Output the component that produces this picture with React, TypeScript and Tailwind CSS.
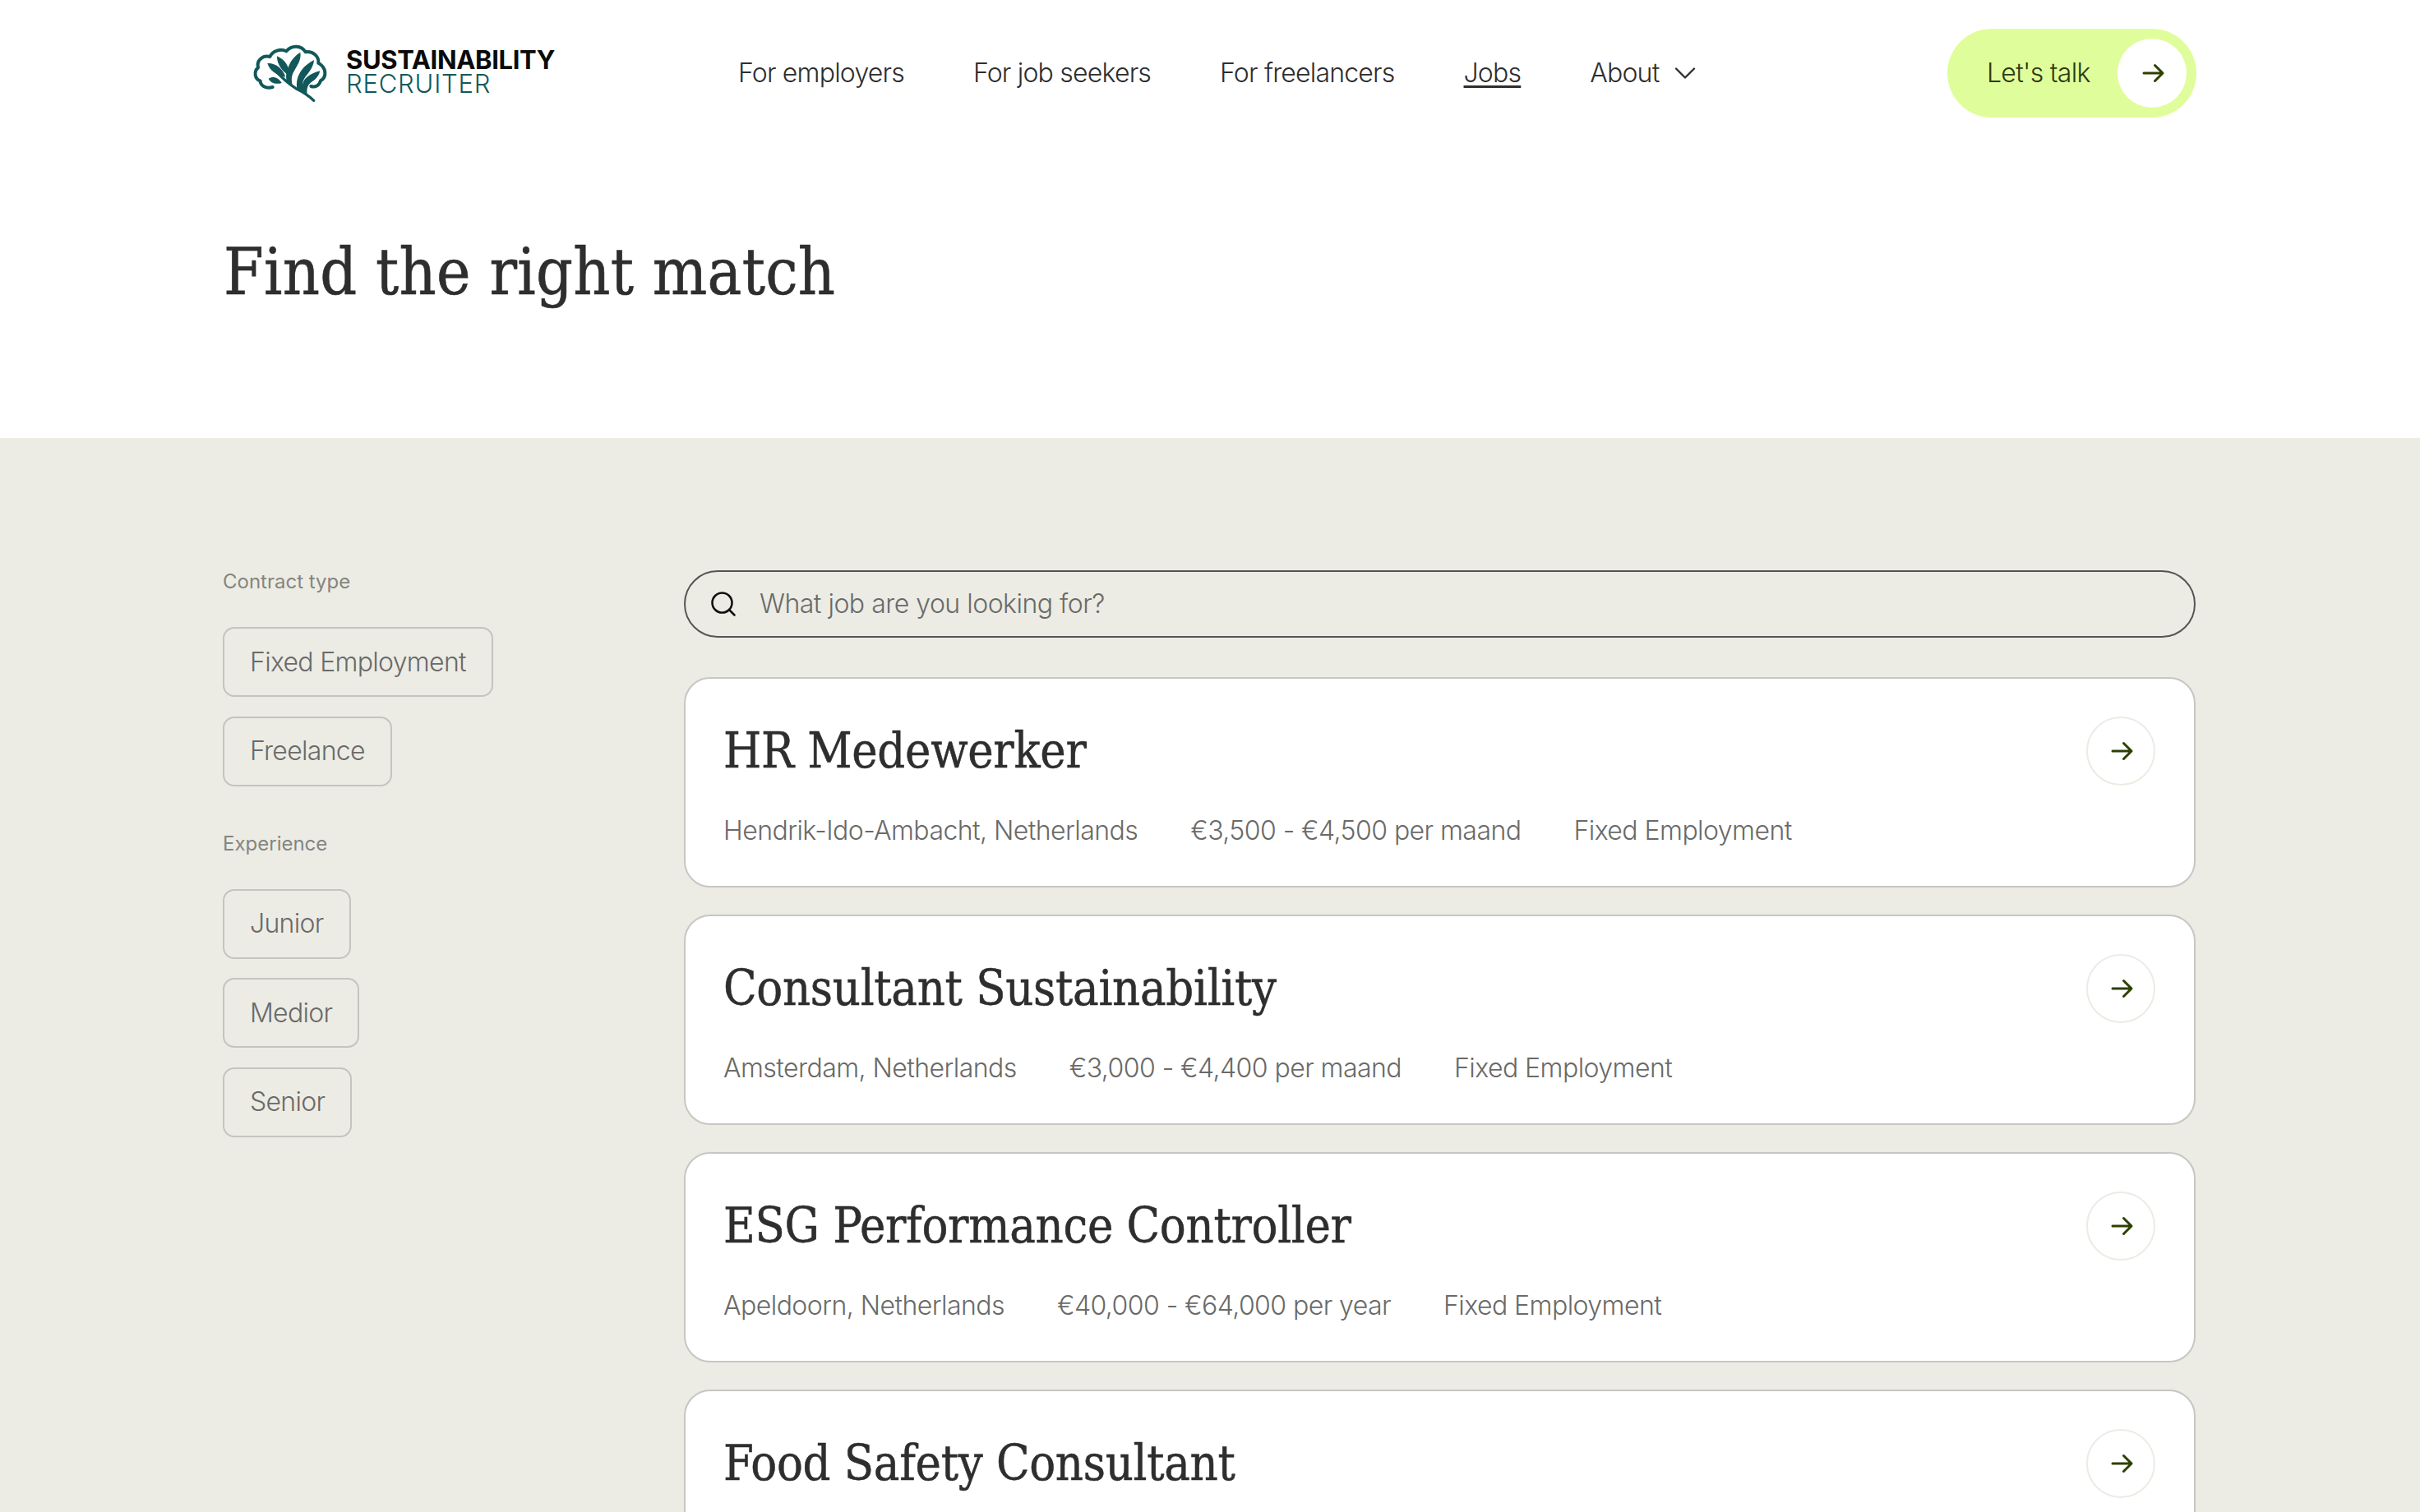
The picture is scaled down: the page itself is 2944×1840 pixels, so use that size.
import React from 'react';
import { ChevronDown, Search } from 'lucide-react';

const jobs = [
  { title: 'HR Medewerker', meta: ['Hendrik-Ido-Ambacht, Netherlands', '€3,500 - €4,500 per maand', 'Fixed Employment'] },
  { title: 'Consultant Sustainability', meta: ['Amsterdam, Netherlands', '€3,000 - €4,400 per maand', 'Fixed Employment'] },
  { title: 'ESG Performance Controller', meta: ['Apeldoorn, Netherlands', '€40,000 - €64,000 per year', 'Fixed Employment'] },
  // the rest of this card is below the fold
  { title: 'Food Safety Consultant', meta: [] },
];

const Logo = () => (
  <svg viewBox="0 0 330 255" className="w-[110px] h-[85px] shrink-0 -mt-[3px]" fill="none" stroke="#12585a" strokeLinecap="round" strokeLinejoin="round">
    <path strokeWidth="12" d="M95 183C70 190 50 178 50 160C30 155 25 125 42 112C35 85 60 65 85 72C95 50 125 42 145 52C165 28 200 30 215 55C240 50 265 70 262 95C290 110 295 145 270 160C265 178 250 185 235 180" />
    <path strokeWidth="10" d="M245 232C225 212 205 200 180 188C155 172 125 145 98 115" />
    <path fill="#12585a" stroke="none" d="M76 96C104 94 132 114 142 146C110 140 84 124 76 96Z" />
    <path fill="#12585a" stroke="none" d="M111 70C139 82 157 106 156 142C130 126 110 100 111 70Z" />
    <path fill="#12585a" stroke="none" d="M196 56C201 85 182 107 172 127C165 139 162 154 167 174L146 160C140 133 151 111 161 91C169 78 180 66 196 56Z" />
    <path fill="#12585a" stroke="none" d="M246 84C244 115 221 134 210 153C203 165 203 182 206 199L184 190C180 163 186 141 201 121C212 105 228 94 246 84Z" />
    <path fill="#12585a" stroke="none" d="M268 124C261 154 241 159 229 172C222 179 219 193 221 206L202 197C201 178 205 161 217 149C231 137 249 128 268 124Z" />
    <path fill="#12585a" stroke="none" d="M80 152C95 142 116 146 128 168C108 174 89 170 80 152Z" />
  </svg>
);

const Arrow = () => (
  <svg viewBox="0 0 32 24" className="w-[32px] h-[24px]" fill="none" stroke="#2c4000" strokeWidth="3" strokeLinecap="round" strokeLinejoin="round">
    <path d="M6 12H29M19.5 2.5L29 12L19.5 21.5" />
  </svg>
);

const Chip = ({ label }: { label: string }) => (
  <button className="h-[85px] px-[31px] self-start border-2 border-[#c4c4c0] rounded-[14px] text-[32px] tracking-[-0.7px] text-[#6a6a68] font-light">
    {label}
  </button>
);

const JobCard = ({ job }: { job: (typeof jobs)[number] }) => (
  <div className="h-[256px] shrink-0 bg-white border-2 border-[#c6c6c3] rounded-[32px] pl-[46px] pr-[47px] pt-[46px] flex justify-between">
    <div>
      <h2 className="font-['DejaVu_Serif_Condensed','DejaVu_Serif',serif] text-[59px] leading-[80px] text-[#2e2e2e] tracking-[-0.3px] [-webkit-text-stroke:0.5px_#2e2e2e] mt-[2px]">{job.title}</h2>
      {job.meta.length > 0 && (
        <div className="flex gap-[64px] mt-[35px] text-[32px] leading-[44px] tracking-[-0.55px] text-[#6a6a68] font-light">
          {job.meta.map(m => <span key={m}>{m}</span>)}
        </div>
      )}
    </div>
    <div className="w-[84px] h-[84px] rounded-full border-2 border-[#ecece5] flex items-center justify-center">
      <Arrow />
    </div>
  </div>
);

export default function App() {
  return (
    <div className="h-[1840px] overflow-hidden bg-white font-['Inter',sans-serif]">
      {/* NAV */}
      <div className="w-[2400px] mx-auto h-[178px] flex items-center">
        <div className="flex items-center gap-[11px] w-[626px] pl-[28px]">
          <Logo />
          <div className="leading-[29px] text-[31px] -mt-[4px]">
            <div className="font-bold text-[#0b0b0b] tracking-[-0.35px]">SUSTAINABILITY</div>
            <div className="font-light text-[#12585a] tracking-[0.8px]">RECRUITER</div>
          </div>
        </div>
        <nav className="flex items-center gap-[84px] text-[32px] tracking-[-0.8px] text-[#2e2e2e] font-light">
          <a>For employers</a>
          <a>For job seekers</a>
          <a>For freelancers</a>
          <a className="underline underline-offset-4">Jobs</a>
          <a className="flex items-center gap-[10px]">
            About <ChevronDown className="w-[44px] h-[44px]" strokeWidth={1.3} />
          </a>
        </nav>
        <div className="ml-auto h-[108px] w-[303px] rounded-full bg-[#e0fd9b] flex items-center justify-between pl-[48px] pr-[12px] text-[32px] tracking-[-0.7px] text-[#2c3a14]">
          <span className="font-light">Let's talk</span>
          <span className="w-[84px] h-[84px] rounded-full bg-white flex items-center justify-center">
            <Arrow />
          </span>
        </div>
      </div>

      {/* HERO */}
      <div className="w-[2400px] mx-auto h-[355px] pt-[98px]">
        <h1 className="font-['DejaVu_Serif_Condensed','DejaVu_Serif',serif] text-[78px] leading-[110px] text-[#2e2e2e] tracking-[0.3px] [-webkit-text-stroke:0.6px_#2e2e2e]">Find the right match</h1>
      </div>

      {/* LISTING */}
      <div className="bg-[#ecece5] h-[1307px]">
        <div className="w-[2400px] mx-auto pt-[161px] flex">
          <aside className="w-[560px] shrink-0 flex flex-col -ml-[1px] mr-[1px]">
            <div className="text-[24px] leading-[30px] text-[#85857f] mb-[40px] mt-[-1px]">Contract type</div>
            <div className="flex flex-col gap-[23.5px]">
              <Chip label="Fixed Employment" />
              <Chip label="Freelance" />
            </div>
            <div className="text-[24px] leading-[30px] text-[#85857f] mt-[55px] mb-[40px]">Experience</div>
            <div className="flex flex-col gap-[23.5px]">
              <Chip label="Junior" />
              <Chip label="Medior" />
              <Chip label="Senior" />
            </div>
          </aside>
          <main className="w-[1839px] flex flex-col">
            <div className="h-[82px] border-2 border-[#555553] rounded-full flex items-center pl-[28px] mb-[48px]">
              <Search className="w-[36px] h-[36px] text-[#111]" strokeWidth={1.7} />
              <span className="ml-[26px] text-[32px] tracking-[-0.5px] text-[#6a6a68] font-light">What job are you looking for?</span>
            </div>
            <div className="flex flex-col gap-[33px]">
              {jobs.map(job => <JobCard key={job.title} job={job} />)}
            </div>
          </main>
        </div>
      </div>
    </div>
  );
}
